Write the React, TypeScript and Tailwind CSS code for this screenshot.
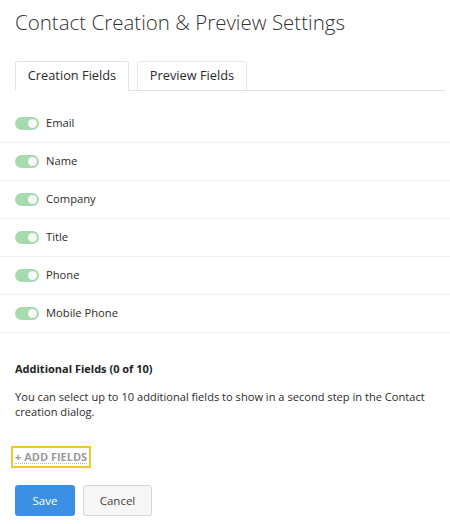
import React from "react";

const fields = ["Email", "Name", "Company", "Title", "Phone", "Mobile Phone"];

function Toggle() {
  return (
    <span className="flex h-[13px] w-[24px] items-center justify-end rounded-full bg-[#a6dbb0] px-[2px]">
      <span className="h-[9px] w-[9px] rounded-full bg-[#f7f7f7]" />
    </span>
  );
}

export default function App() {
  return (
    <div className="h-[524px] w-[450px] overflow-hidden bg-white font-['Open_Sans',sans-serif] text-[#2b2b2b]">
      <h1 className="px-[15px] pt-[8px] text-[20.5px] font-light leading-[28px] text-[#333]">
        Contact Creation &amp; Preview Settings
      </h1>

      <div className="ml-[15px] mr-[5px] mt-[25px] flex border-b border-[#e2e2e2]">
        <button className="-mb-px h-[30px] w-[114px] rounded-t-[3px] border border-b-white border-[#e2e2e2] bg-white text-[12.8px] text-[#2b2b2b]">
          Creation Fields
        </button>
        <button className="ml-[8px] h-[29px] w-[110px] rounded-t-[3px] border border-b-0 border-[#e8e8e8] bg-white text-[12.8px] text-[#2b2b2b]">
          Preview Fields
        </button>
      </div>

      <div className="mt-[14px]">
        {fields.map((f) => (
          <div
            key={f}
            className="flex h-[38px] items-center gap-[7px] border-b border-[#f1f1f1] px-[15px]"
          >
            <Toggle />
            <span className="text-[11.2px]">{f}</span>
          </div>
        ))}
      </div>

      <div className="px-[15px]">
        <h2 className="mt-[27px] text-[11px] font-bold leading-[18px] text-[#222]">Additional Fields (0 of 10)</h2>
        <p className="mt-[11px] text-[11.1px] leading-[15px]">
          You can select up to 10 additional fields to show in a second step in the Contact
          creation dialog.
        </p>

        <div className="-ml-[4px] mt-[27px] inline-flex h-[22px] items-center border-2 border-[#f2c62a] px-[2px]">
          <span className="border-b border-dotted border-[#bbb] text-[11px] font-bold uppercase leading-[13px] text-[#9a9a9a]">
            + Add Fields
          </span>
        </div>

        <div className="mt-[17px] flex gap-[8px]">
          <button className="h-[31px] w-[60px] rounded-[3px] bg-[#3b8fe5] text-[11.5px] text-white">
            Save
          </button>
          <button className="h-[31px] w-[69px] rounded-[3px] border border-[#d6d6d6] bg-[#f6f6f6] text-[11.5px] text-[#444]">
            Cancel
          </button>
        </div>
      </div>
    </div>
  );
}
